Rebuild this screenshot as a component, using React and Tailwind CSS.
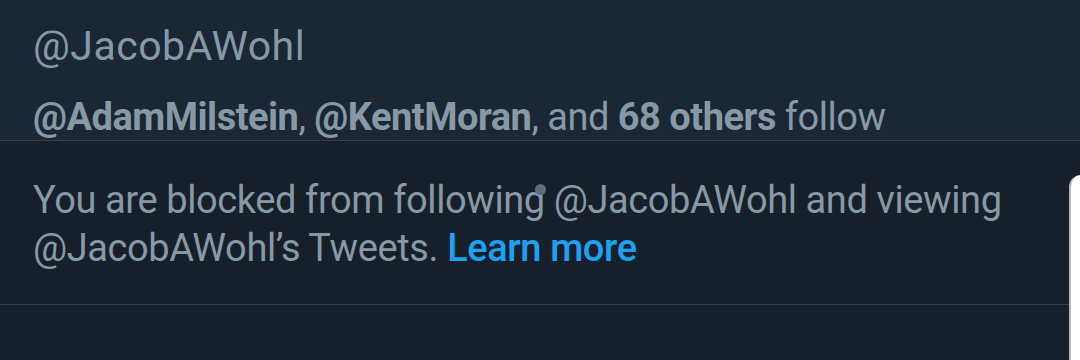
import React from "react";

const App = () => {
  return (
    <div
      className="relative w-[1080px] h-[360px] overflow-hidden bg-[#17202a]"
      style={{ fontFamily: "Roboto, 'Liberation Sans', sans-serif" }}
    >
      {/* profile header */}
      <div className="bg-[#1b2735] px-[33px] pt-[21px] h-[141px] border-b border-[#323e4a]">
        <div className="text-[41px] leading-[50px] tracking-[0.5px] text-[#8899a6]">@JacobAWohl</div>
        <div className="mt-[26px] text-[38px] leading-[40px] tracking-[-0.5px] text-[#8899a6] whitespace-nowrap">
          <span className="font-bold">@AdamMilstein</span>, <span className="font-bold">@KentMoran</span>, and{" "}
          <span className="font-bold">68 others</span> follow
        </div>
      </div>

      {/* blocked notice */}
      <div className="px-[33px] pt-[35px] h-[164px] border-b border-[#323e4a]">
        <p className="text-[38px] leading-[48px] tracking-[-0.4px] text-[#8899a6] whitespace-nowrap">
          You are blocked from following @JacobAWohl and viewing
          <br />
          @JacobAWohl’s Tweets. <span className="text-[#1da1f2] font-medium">Learn more</span>
        </p>
      </div>

      {/* touch dot */}
      <span className="absolute left-[535px] top-[184px] w-[11px] h-[11px] rounded-full bg-[#5c6e80]" />

      {/* sheet peeking in at right */}
      <div className="absolute left-[1069px] top-[175px] w-[20px] h-[200px] rounded-tl-[12px] bg-white border-l-2 border-[#b8b8b8]" />
    </div>
  );
};

export default App;
